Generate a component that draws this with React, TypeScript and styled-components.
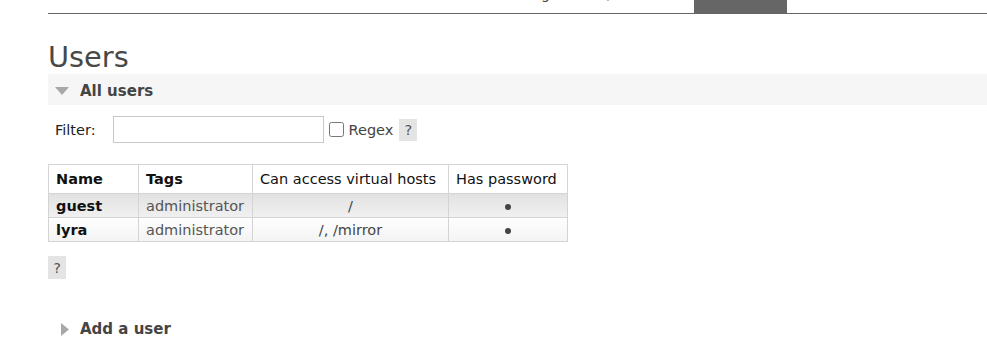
import React from 'react';
import styled, { createGlobalStyle } from 'styled-components';

const GlobalStyle = createGlobalStyle`
  body {
    margin: 0;
    background: #fff;
    font-family: Verdana, "DejaVu Sans", sans-serif;
    font-size: 14.5px;
    color: #222;
  }
`;

const Page = styled.div`
  width: 987px;
  height: 355px;
  overflow: hidden;
`;

// the page is scrolled: only the bottom edge of the menu is left in view
const Nav = styled.nav`
  display: flex;
  justify-content: flex-end;
  align-items: flex-end;
  height: 13px;
  margin-left: 48px;
  padding-right: 200px;
  border-bottom: 1px solid #666;
  overflow: hidden;
`;

const NavLink = styled.span`
  font-size: 14px;
  line-height: 17px;
  padding: 0 17px;
  margin-bottom: 10px;
  color: #484848;
  white-space: nowrap;
`;

const NavTab = styled.span`
  align-self: stretch;
  width: 93px;
  margin-left: 24px;
  background: #666;
  overflow: hidden;
`;

const TabText = styled.span`
  display: block;
  margin-top: -17px;
  font-size: 14px;
  line-height: 17px;
  color: #fff;
  text-align: center;
`;

const Main = styled.main`
  padding-left: 48px;
`;

const Title = styled.h1`
  margin: 27px 0 0;
  font-size: 28.8px;
  font-weight: normal;
  line-height: 33px;
  color: #484848;
`;

const SectionHead = styled.h2<{ $open?: boolean }>`
  display: flex;
  align-items: center;
  gap: 11px;
  height: 28px;
  margin: 0;
  padding: 3px 0 0 7px;
  background: ${p => (p.$open ? '#f6f6f6' : 'transparent')};
  font-size: 15px;
  font-weight: bold;
  line-height: 28px;
  color: #444;
`;

const Arrow = styled.span`
  display: flex;
  justify-content: flex-end;
  align-items: center;
  width: 14px;
  svg {
    display: block;
  }
`;

const FilterRow = styled.div`
  display: flex;
  align-items: center;
  height: 27px;
  margin-top: 11px;
  padding-left: 7px;
`;

const Label = styled.label`
  margin-right: 17px;
  color: #222;
`;

const TextInput = styled.input`
  box-sizing: border-box;
  width: 211px;
  height: 27px;
  margin: 0 5px 0 0;
  border: 1px solid #c8c8c8;
  background: #fff;
`;

const Check = styled.input`
  width: 15px;
  height: 15px;
  margin: 0 5px 0 0;
`;

const CheckLabel = styled.span`
  margin-right: 6px;
  color: #444;
`;

const Help = styled.span`
  display: inline-flex;
  justify-content: center;
  align-items: center;
  width: 18px;
  height: 22px;
  background: #e4e4e4;
  color: #555;
  font-size: 14.5px;
`;

const HelpBlock = styled.div`
  margin-top: 14px;
  height: 23px;
  ${Help} {
    height: 23px;
  }
`;

const Table = styled.table`
  margin-top: 21px;
  border-collapse: collapse;
  table-layout: fixed;
`;

const Th = styled.th<{ $bold?: boolean; $w: number }>`
  width: ${p => p.$w}px;
  height: 28px;
  padding: 0 7px;
  border: 1px solid #d4d4d4;
  text-align: left;
  font-weight: ${p => (p.$bold ? 'bold' : 'normal')};
  color: #111;
  white-space: nowrap;
`;

const Row = styled.tr<{ $alt: 1 | 2 }>`
  background: ${p =>
    p.$alt === 1
      ? 'linear-gradient(to bottom, #e2e2e2, #f1f1f1)'
      : 'linear-gradient(to bottom, #ffffff, #f3f3f3)'};
`;

const Td = styled.td<{ $kind?: 'name' | 'tag' | 'center' }>`
  height: 23px;
  padding: 0 7px;
  border: 1px solid #d4d4d4;
  text-align: ${p => (p.$kind === 'center' ? 'center' : 'left')};
  font-weight: ${p => (p.$kind === 'name' ? 'bold' : 'normal')};
  color: ${p => (p.$kind === 'tag' ? '#555' : p.$kind === 'name' ? '#111' : '#444')};
  white-space: nowrap;
`;

const Dot = styled.span`
  display: inline-block;
  width: 6px;
  height: 6px;
  border-radius: 50%;
  background: #444;
  vertical-align: middle;
`;

const AddSection = styled.div`
  margin-top: 33px;
`;

const users = [
  { name: 'guest', tags: 'administrator', vhosts: '/' },
  { name: 'lyra', tags: 'administrator', vhosts: '/, /mirror' },
];

const App: React.FC = () => {
  return (
    <Page>
      <GlobalStyle />
      <Nav>
        <NavLink>Overview</NavLink>
        <NavLink>Connections</NavLink>
        <NavLink>Channels</NavLink>
        <NavLink>Exchanges</NavLink>
        <NavLink>Queues</NavLink>
        <NavTab>
          <TabText>Admin</TabText>
        </NavTab>
      </Nav>
      <Main>
        <Title>Users</Title>
        <SectionHead $open>
          <Arrow>
            <svg width="14" height="8" viewBox="0 0 14 8">
              <path d="M0 0 L14 0 L7 8 Z" fill="#a8a8a8" />
            </svg>
          </Arrow>
          All users
        </SectionHead>
        <FilterRow>
          <Label>Filter:</Label>
          <TextInput type="text" />
          <Check type="checkbox" />
          <CheckLabel>Regex</CheckLabel>
          <Help>?</Help>
        </FilterRow>
        <Table>
          <thead>
            <tr>
              <Th $bold $w={75}>Name</Th>
              <Th $bold $w={99}>Tags</Th>
              <Th $w={181}>Can access virtual hosts</Th>
              <Th $w={104}>Has password</Th>
            </tr>
          </thead>
          <tbody>
            {users.map((u, i) => (
              <Row key={u.name} $alt={i % 2 === 0 ? 1 : 2}>
                <Td $kind="name">{u.name}</Td>
                <Td $kind="tag">{u.tags}</Td>
                <Td $kind="center">{u.vhosts}</Td>
                <Td $kind="center"><Dot /></Td>
              </Row>
            ))}
          </tbody>
        </Table>
        <HelpBlock>
          <Help>?</Help>
        </HelpBlock>
        <AddSection>
          <SectionHead>
            <Arrow>
              <svg width="8" height="13" viewBox="0 0 8 13">
                <path d="M0 0 L8 6.5 L0 13 Z" fill="#a8a8a8" />
              </svg>
            </Arrow>
            Add a user
          </SectionHead>
        </AddSection>
      </Main>
    </Page>
  );
};

export default App;
